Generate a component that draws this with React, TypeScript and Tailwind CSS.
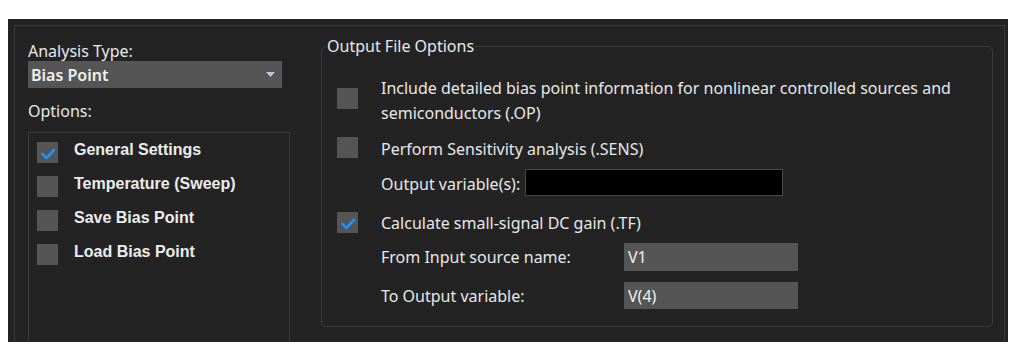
import React from "react";

const seg = { fontFamily: '"Noto Sans", "Open Sans", sans-serif' };
const arial = { fontFamily: '"Liberation Sans", Arial, sans-serif' };

function Box({ checked }: { checked?: boolean }) {
  return (
    <div className="w-[21px] h-[21px] bg-[#555555] shrink-0 relative">
      {checked && (
        <svg width="21" height="21" viewBox="0 0 21 21" className="absolute left-0 top-0">
          <polyline points="5.5,12 9.5,16 17,8" fill="none" stroke="#1e90ff" strokeWidth="2.6" strokeLinecap="round" strokeLinejoin="round" />
        </svg>
      )}
    </div>
  );
}

function ListItem({ label, checked }: { label: string; checked?: boolean }) {
  return (
    <div className="flex items-start h-[34px]">
      <div className="ml-[8px]">
        <Box checked={checked} />
      </div>
      <span className="ml-[16px] text-[16px] font-bold text-[#ececec] leading-[16px] mt-[0px]" style={arial}>
        {label}
      </span>
    </div>
  );
}

export default function App() {
  return (
    <div className="w-[1028px] h-[354px] bg-white pt-[19px] pl-[8px]" style={seg}>
      <div className="w-[1000px] h-[323px] bg-[#232323] overflow-hidden pt-[6px] pl-[6px] pr-[3px]">
        <div className="border border-[#3a3a3a] h-[400px] flex">
          {/* Left column */}
          <div className="w-[262px] ml-[13px] flex flex-col text-[#e8e8e8]">
            <div className="mt-[17px] text-[16px] leading-[16px]">Analysis Type:</div>
            <div className="mt-[2px] w-[254px] h-[27px] bg-[#555555] flex items-center justify-between pl-[3px] pr-[7px]">
              <span className="text-[16px] font-semibold leading-[16px] text-[#f0f0f0]">Bias Point</span>
              <svg width="9" height="5" viewBox="0 0 9 5">
                <polygon points="0,0 9,0 4.5,5" fill="#c4c4e0" />
              </svg>
            </div>
            <div className="mt-[15px] text-[16px] leading-[16px]">Options:</div>
            <div className="mt-[13px] border border-[#3c3c3c] h-[260px] pt-[9px]">
              <ListItem label="General Settings" checked />
              <ListItem label="Temperature (Sweep)" />
              <ListItem label="Save Bias Point" />
              <ListItem label="Load Bias Point" />
            </div>
          </div>

          {/* Right group */}
          <fieldset className="ml-[31px] mt-[12px] w-[672px] h-[289px] border border-[#3c3c3c] rounded-[5px] text-[#e8e8e8] text-[16px]">
            <legend className="ml-[4px] px-[1px] leading-[16px]">Output File Options</legend>
            <div className="pl-[15px]">
              <div className="flex items-start mt-[22px]">
                <div className="mt-[12px]">
                  <Box />
                </div>
                <div className="ml-[23px] leading-[25px]">
                  Include detailed bias point information for nonlinear controlled sources and
                  <br />
                  semiconductors (.OP)
                </div>
              </div>
              <div className="flex items-center mt-[11px] h-[21px]">
                <Box />
                <span className="ml-[23px] leading-[22px] mt-[2px]">Perform Sensitivity analysis (.SENS)</span>
              </div>
              <div className="flex items-center mt-[11px] ml-[44px] h-[27px]">
                <span className="w-[144px] leading-[22px] mt-[2px]">Output variable(s):</span>
                <div className="w-[258px] h-[27px] bg-black border border-[#474747]" />
              </div>
              <div className="flex items-center mt-[16px] h-[21px]">
                <Box checked />
                <span className="ml-[23px] leading-[22px]">Calculate small-signal DC gain (.TF)</span>
              </div>
              <div className="flex items-center mt-[10px] ml-[44px] h-[28px]">
                <span className="w-[243px] leading-[22px]">From Input source name:</span>
                <div className="w-[174px] h-[28px] bg-[#555555] flex items-center pl-[4px] text-[#f0f0f0] leading-[22px]">V1</div>
              </div>
              <div className="flex items-center mt-[11px] ml-[44px] h-[27px]">
                <span className="w-[243px] leading-[22px]">To Output variable:</span>
                <div className="w-[174px] h-[27px] bg-[#555555] flex items-center pl-[4px] text-[#f0f0f0] leading-[22px]">V(4)</div>
              </div>
            </div>
          </fieldset>
        </div>
      </div>
    </div>
  );
}
